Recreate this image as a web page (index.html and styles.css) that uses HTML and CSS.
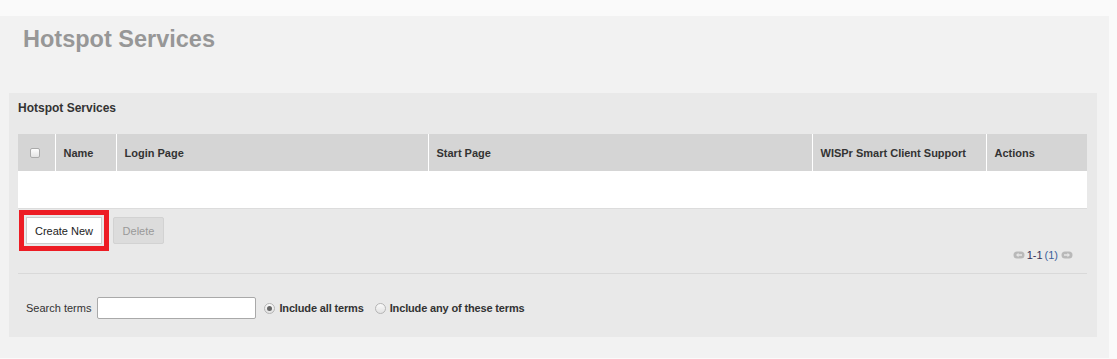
FILE: index.html
```html
<!DOCTYPE html>
<html>
<head>
    <meta charset="UTF-8">
    <title>Hotspot Services</title>
    <link rel="stylesheet" href="styles.css">
</head>
<body>
    <div class="page">
        <h1 class="page-title">Hotspot Services</h1>

        <div class="panel">
            <div class="panel-title">Hotspot Services</div>

            <table class="grid">
                <thead>
                    <tr>
                        <th class="col-check"><span class="checkbox"></span></th>
                        <th class="col-name">Name</th>
                        <th class="col-login">Login Page</th>
                        <th class="col-start">Start Page</th>
                        <th class="col-wispr">WISPr Smart Client Support</th>
                        <th class="col-actions">Actions</th>
                    </tr>
                </thead>
                <tbody>
                    <tr class="empty-row">
                        <td></td><td></td><td></td><td></td><td></td><td></td>
                    </tr>
                </tbody>
            </table>

            <div class="button-row">
                <button type="button" class="btn btn-create">Create New</button>
                <button type="button" class="btn btn-disabled" disabled>Delete</button>
            </div>

            <div class="pager">
                <svg class="pager-arrow" width="12" height="8" viewBox="0 0 12 8">
                    <rect x="0.5" y="0.5" width="11" height="7" rx="3.5" fill="#b9b9b9"/>
                    <path d="M3 4 L5.5 1.8 L5.5 3.2 L9 3.2 L9 4.8 L5.5 4.8 L5.5 6.2 Z" fill="#e6e6e6"/>
                </svg>
                <span class="pager-range">1-1</span>
                <a class="pager-count">(1)</a>
                <svg class="pager-arrow" width="12" height="8" viewBox="0 0 12 8">
                    <rect x="0.5" y="0.5" width="11" height="7" rx="3.5" fill="#b9b9b9"/>
                    <path d="M9 4 L6.5 1.8 L6.5 3.2 L3 3.2 L3 4.8 L6.5 4.8 L6.5 6.2 Z" fill="#e6e6e6"/>
                </svg>
            </div>

            <div class="search-row">
                <label class="search-label" for="search">Search terms</label>
                <input type="text" id="search" class="search-input">
                <span class="radio checked"></span>
                <span class="radio-label">Include all terms</span>
                <span class="radio"></span>
                <span class="radio-label">Include any of these terms</span>
            </div>
        </div>
    </div>
</body>
</html>
```

FILE: styles.css
```css
body {
    margin: 0;
    background: #fafafa;
    font-family: "Liberation Sans", Arial, sans-serif;
    color: #333;
}
.page {
    margin-top: 16px;
    width: 1109px;
    padding-bottom: 21px;
    background: #f2f2f2;
    overflow: hidden;
}
.page-title {
    margin: 9px 0 40px 23px;
    font-size: 23.5px;
    line-height: 28px;
    font-weight: bold;
    color: #979797;
}
.panel {
    margin-left: 9px;
    width: 1088px;
    box-sizing: border-box;
    padding: 8px 10px 18px 9px;
    background: #e9e9e9;
}
.panel-title {
    font-size: 12px;
    line-height: 14px;
    font-weight: bold;
    color: #333;
    margin-bottom: 19px;
}
.grid {
    width: 1069px;
    border-collapse: collapse;
    table-layout: fixed;
    font-size: 11px;
}
.grid th {
    height: 37px;
    padding: 0 0 0 8px;
    background: #d5d5d5;
    border-left: 1px solid #fff;
    text-align: left;
    font-weight: bold;
    color: #333;
    box-sizing: border-box;
}
.grid th:first-child {
    border-left: none;
}
.col-check { width: 37px; }
.col-name { width: 61px; }
.col-login { width: 312px; }
.col-start { width: 384px; }
.col-wispr { width: 174px; }
.col-actions { width: 101px; }
.grid th.col-check {
    padding-left: 12px;
}
.checkbox {
    display: block;
    width: 8px;
    height: 8px;
    border: 1px solid #aaa;
    border-radius: 2px;
    background: linear-gradient(#fdfdfd, #e4e4e4);
}
.empty-row td {
    height: 37px;
    padding: 0;
    background: #fff;
    border-bottom: 1px solid #dcdcdc;
}
.button-row {
    display: flex;
    gap: 11px;
    margin-top: 8px;
    padding-left: 8px;
}
.btn {
    height: 27px;
    padding: 0;
    font-family: "Liberation Sans", Arial, sans-serif;
    font-size: 11px;
    white-space: nowrap;
    box-sizing: border-box;
}
.btn-create {
    width: 76px;
    background: #fff;
    border: 1px solid #ccc;
    border-radius: 0;
    color: #222;
    outline: 5px solid #ed1c24;
    outline-offset: 2px;
}
.btn-disabled {
    width: 51px;
    background: #dcdcdc;
    border: 1px solid #d2d2d2;
    border-radius: 2px;
    color: #999;
}
.pager {
    display: flex;
    justify-content: flex-end;
    align-items: center;
    gap: 2px;
    margin-top: 4px;
    height: 13px;
    padding-right: 14px;
    font-size: 11px;
}
.pager-range {
    color: #33335a;
}
.pager-count {
    color: #3d5f9a;
    margin-right: 1px;
}
.search-row {
    display: flex;
    align-items: center;
    margin-top: 12px;
    padding-top: 23px;
    padding-left: 8px;
    border-top: 1px solid #d9d9d9;
    font-size: 11px;
}
.search-label {
    color: #333;
    margin-right: 6px;
}
.search-input {
    width: 159px;
    height: 22px;
    box-sizing: border-box;
    border: 1px solid #a9a9a9;
    border-radius: 2px;
    background: #fff;
    margin: 0 8px 0 0;
}
.radio {
    width: 9px;
    height: 9px;
    border: 1px solid #b5b5b5;
    border-radius: 50%;
    background: linear-gradient(#fafafa, #e2e2e2);
    position: relative;
    margin-right: 4px;
}
.radio.checked::after {
    content: "";
    position: absolute;
    left: 2px;
    top: 2px;
    width: 5px;
    height: 5px;
    border-radius: 50%;
    background: #666;
}
.radio-label {
    font-weight: bold;
    color: #333;
    letter-spacing: -0.15px;
    margin-right: 11px;
}
```
